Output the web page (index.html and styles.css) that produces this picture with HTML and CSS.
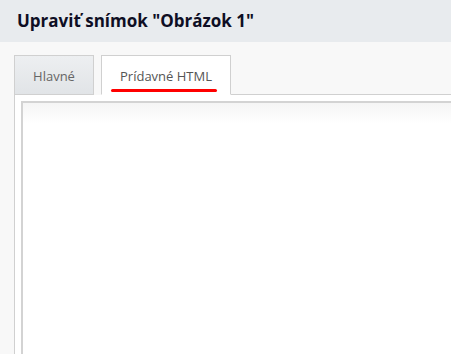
FILE: index.html
```html
<!DOCTYPE html>
<html lang="sk">
<head>
<meta charset="utf-8">
<link rel="stylesheet" href="styles.css">
</head>
<body>
<div class="dialog">
  <div class="header">
    <h1 class="title">Upraviť snímok "Obrázok 1"</h1>
  </div>
  <div class="body">
    <div class="tabs">
      <div class="tab">Hlavné</div>
      <div class="tab active"><span class="label">Prídavné HTML</span></div>
      <div class="tab-fill"></div>
    </div>
    <div class="panel">
      <div class="editor"></div>
    </div>
  </div>
</div>
</body>
</html>
```
FILE: styles.css
```css
* { box-sizing: border-box; }
html, body { margin: 0; padding: 0; }
body {
  font-family: "Open Sans", "Noto Sans", sans-serif;
  background: #f8f8f8;
  width: 451px;
  height: 354px;
  overflow: hidden;
}
.dialog { display: flex; flex-direction: column; height: 354px; }
.header {
  height: 42px;
  background: #e8ebee;
  display: flex;
  align-items: center;
  padding-left: 17px;
}
.title {
  margin: 0;
  font-size: 17px;
  font-weight: 700;
  color: #0e0e24;
  line-height: 20px;
}
.body {
  flex: 1;
  display: flex;
  flex-direction: column;
  padding: 13px 0 0 14px;
}
.tabs {
  display: flex;
  align-items: flex-end;
  height: 40px;
}
.tab {
  height: 40px;
  width: 80px;
  border: 1px solid #d0d0d0;
  border-bottom: 1px solid #d0d0d0;
  background: linear-gradient(#edeff1, #e1e4e7);
  color: #666;
  font-size: 13px;
  display: flex;
  align-items: center;
  justify-content: center;
  padding-top: 1px;
  margin-right: 7px;
}
.tab.active {
  width: 130px;
  background: #fff;
  border-bottom: 1px solid #fff;
  color: #555;
  margin-right: 0;
  position: relative;
}
.tab.active .label { position: relative; }
.tab.active::after {
  content: "";
  position: absolute;
  left: 9px;
  width: 106px;
  top: 33px;
  height: 3px;
  border-radius: 2px;
  background: #ff0000;
}
.tab-fill {
  flex: 1;
  border-bottom: 1px solid #d0d0d0;
  height: 40px;
}
.panel {
  flex: 1;
  background: #fff;
  border-left: 1px solid #d0d0d0;
  padding: 6px 0 0 6px;
  display: flex;
}
.editor {
  flex: 1;
  border: 2px solid #d3d3d3;
  border-right: none;
  border-bottom: none;
  background: linear-gradient(#f5f5f5, #ffffff 20px);
}
```
